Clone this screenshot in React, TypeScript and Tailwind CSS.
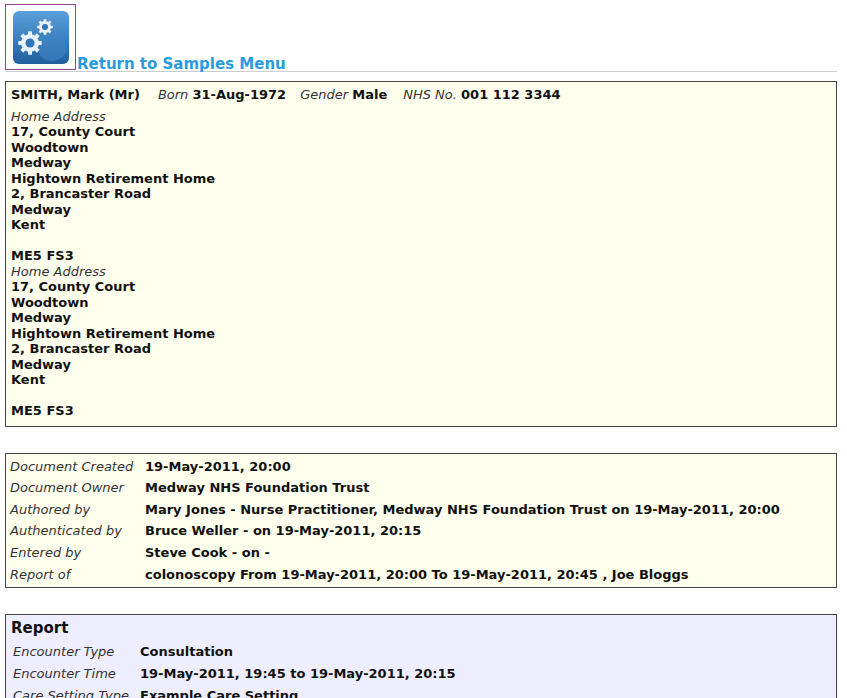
import React from 'react';

const addr = ['17, County Court', 'Woodtown', 'Medway', 'Hightown Retirement Home', '2, Brancaster Road', 'Medway', 'Kent'];

function Address() {
  return (
    <div>
      <div className="italic text-[#333]">Home Address</div>
      {addr.map((a, i) => (
        <div key={i} className="font-bold">{a}</div>
      ))}
      <div className="h-[15.5px]" />
      <div className="font-bold">ME5 FS3</div>
    </div>
  );
}

function Gear({ cx, cy, r }: { cx: number; cy: number; r: number }) {
  const teeth = Array.from({ length: 8 }, (_, i) => i * 45);
  return (
    <g fill="#e8f2fb">
      {teeth.map((a) => (
        <rect key={a} x={cx - r * 0.22} y={cy - r * 1.3} width={r * 0.44} height={r * 0.6} transform={`rotate(${a} ${cx} ${cy})`} />
      ))}
      <circle cx={cx} cy={cy} r={r} />
      <circle cx={cx} cy={cy} r={r * 0.5} fill="#2f75b5" />
    </g>
  );
}

const docRows: [string, string][] = [
  ['Document Created', '19-May-2011, 20:00'],
  ['Document Owner', 'Medway NHS Foundation Trust'],
  ['Authored by', 'Mary Jones - Nurse Practitioner, Medway NHS Foundation Trust on 19-May-2011, 20:00'],
  ['Authenticated by', 'Bruce Weller - on 19-May-2011, 20:15'],
  ['Entered by', 'Steve Cook - on -'],
  ['Report of', 'colonoscopy From 19-May-2011, 20:00 To 19-May-2011, 20:45 , Joe Bloggs'],
];

const repRows: [string, string][] = [
  ['Encounter Type', 'Consultation'],
  ['Encounter Time', '19-May-2011, 19:45 to 19-May-2011, 20:15'],
  ['Care Setting Type', 'Example Care Setting'],
];

export default function App() {
  return (
    <div className="h-[698px] overflow-hidden bg-white text-[13px] leading-[15.5px] text-[#111]" style={{ fontFamily: '"DejaVu Sans", Verdana, sans-serif' }}>
      <div className="pl-[5px] pr-[10px] pt-[4px]">
        <div className="flex items-end border-b border-[#ccc] pb-[1px]">
          <div className="w-[71px] h-[66px] border border-[#8b4a8b] flex items-center justify-center">
            <svg width="58" height="55" viewBox="0 0 58 55">
              <defs>
                <linearGradient id="g" x1="0" y1="0" x2="0" y2="1">
                  <stop offset="0" stopColor="#5aa0dc" />
                  <stop offset="1" stopColor="#1f5f9e" />
                </linearGradient>
              </defs>
              <rect x="1" y="1" width="56" height="53" rx="6" fill="url(#g)" />
              <circle cx="40" cy="36" r="15" fill="#3f86c8" opacity="0.6" />
              <Gear cx={18} cy={33} r={9} />
              <Gear cx={33} cy={17} r={6} />
            </svg>
          </div>
          <span className="ml-[1px] mb-[-2px] font-bold text-[15px] text-[#2b9be0]">Return to Samples Menu</span>
        </div>

        <div className="mt-[9px] border border-[#444] bg-[#ffffee] px-[5px] pt-[5px] pb-[7px]">
          <div className="mb-[6px]">
            <span className="font-bold">SMITH, Mark (Mr)</span>
            <span className="italic ml-[18px] text-[#333]">Born</span> <span className="font-bold">31-Aug-1972</span>
            <span className="italic ml-[14px] text-[#333]">Gender</span> <span className="font-bold">Male</span>
            <span className="italic ml-[16px] text-[#333]">NHS No.</span> <span className="font-bold">001 112 3344</span>
          </div>
          <Address />
          <Address />
        </div>

        <div className="mt-[26px] border border-[#444] bg-[#ffffee] px-[4px] py-[2px]">
          {docRows.map(([k, v]) => (
            <div key={k} className="flex h-[21.6px] items-center">
              <div className="w-[135px] italic text-[#333]">{k}</div>
              <div className="font-bold">{v}</div>
            </div>
          ))}
        </div>

        <div className="mt-[26px] border border-[#444] bg-[#eeeeff] px-[5px] pt-[3px] pb-[6px]">
          <div className="font-bold text-[15px] leading-[20px] mb-[3px]">Report</div>
          {repRows.map(([k, v]) => (
            <div key={k} className="flex h-[22px] items-center">
              <div className="w-[129px] italic text-[#333] pl-[2px]">{k}</div>
              <div className="font-bold">{v}</div>
            </div>
          ))}
        </div>
      </div>
    </div>
  );
}
